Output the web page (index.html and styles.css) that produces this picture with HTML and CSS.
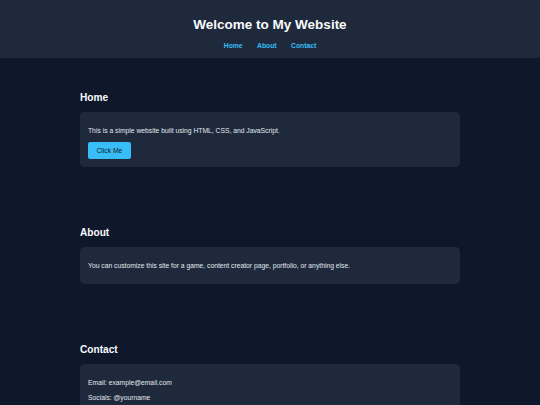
FILE: index.html
```html
<!DOCTYPE html>
<html lang="en">
<head>
<meta charset="utf-8">
<title>Welcome to My Website</title>
<link rel="stylesheet" href="styles.css">
</head>
<body>
<header class="site-header">
  <h1 class="site-title">Welcome to My Website</h1>
  <nav class="site-nav">
    <a href="#home">Home</a>
    <a href="#about">About</a>
    <a href="#contact">Contact</a>
  </nav>
</header>
<main>
  <section class="section" id="home">
    <h2 class="section-title">Home</h2>
    <div class="card">
      <p>This is a simple website built using HTML, CSS, and JavaScript.</p>
      <button class="btn" type="button">Click Me</button>
    </div>
  </section>
  <section class="section" id="about">
    <h2 class="section-title">About</h2>
    <div class="card">
      <p>You can customize this site for a game, content creator page, portfolio, or anything else.</p>
    </div>
  </section>
  <section class="section" id="contact">
    <h2 class="section-title">Contact</h2>
    <div class="card">
      <p>Email: example@email.com</p>
      <p>Socials: @yourname</p>
    </div>
  </section>
</main>
</body>
</html>
```
FILE: styles.css
```css
html, body {
  margin: 0;
  padding: 0;
}
body {
  background: #0f172a;
  color: #e2e8f0;
  font-family: "Liberation Sans", Arial, sans-serif;
  font-size: 6.75px;
  line-height: 7.76px;
}
.site-header {
  background: #1e293b;
  text-align: center;
  padding: 8.4px 0;
}
.site-title {
  font-size: 13.5px;
  line-height: 15.5px;
  margin: 9px 0;
  color: #f8fafc;
}
.site-nav {
  line-height: 7.76px;
}
.site-nav a {
  color: #38bdf8;
  text-decoration: none;
  font-weight: bold;
  margin: 0 6.3px;
}
.section {
  max-width: 380px;
  margin: 0 auto;
  padding: 25.6px 0;
}
.section-title {
  font-size: 10.125px;
  line-height: 11.63px;
  margin: 8.4px 0 8.8px;
  color: #f8fafc;
}
.card {
  background: #1e293b;
  border-radius: 4.2px;
  padding: 8px;
}
.card p {
  margin: 6.75px 0;
}
.btn {
  display: inline-block;
  background: #38bdf8;
  color: #0f172a;
  border: none;
  border-radius: 2.1px;
  font-family: inherit;
  font-size: 6.75px;
  line-height: 7.76px;
  padding: 4.8px 8.4px;
  cursor: pointer;
}
```
